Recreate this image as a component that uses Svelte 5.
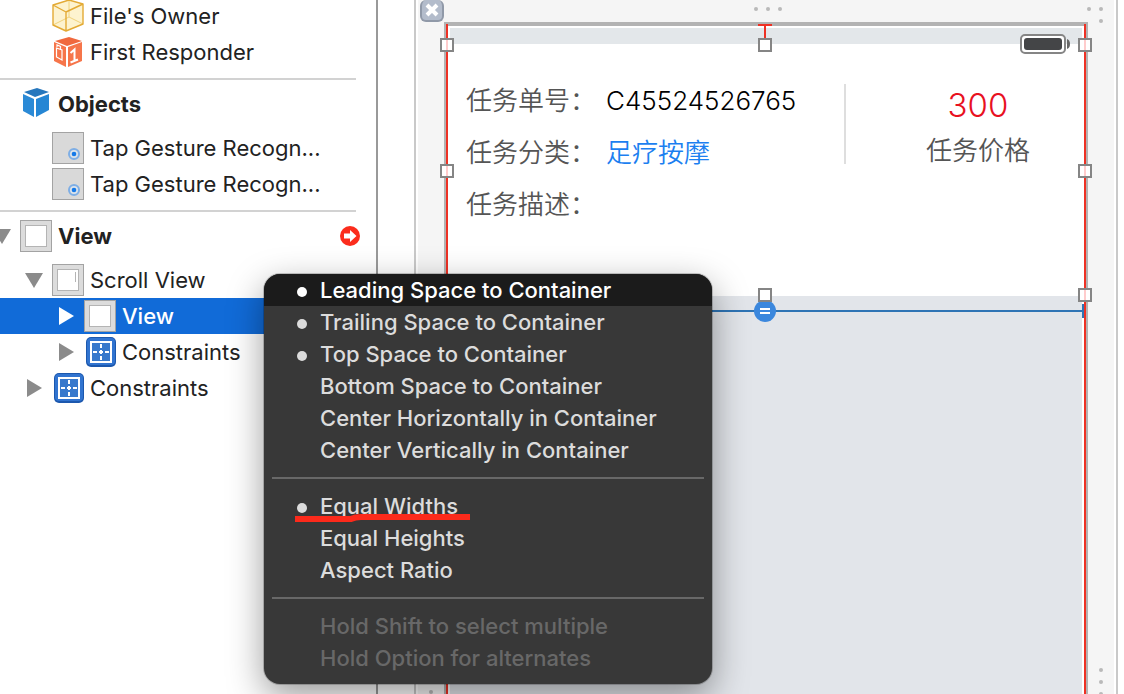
<script>
  const documentRows = [
    { label: "File's Owner", icon: 'owner', depth: 1 },
    { label: 'First Responder', icon: 'responder', depth: 1 }
  ];

  const objectRows = [
    { label: 'Tap Gesture Recogn...', icon: 'gesture', depth: 1 },
    { label: 'Tap Gesture Recogn...', icon: 'gesture', depth: 1 }
  ];

  const viewRows = [
    { label: 'Scroll View', icon: 'scroll', depth: 1, toggle: 'open' },
    { label: 'View', icon: 'view', depth: 2, toggle: 'closed', selected: true },
    { label: 'Constraints', icon: 'constraints', depth: 2, toggle: 'closed' },
    { label: 'Constraints', icon: 'constraints', depth: 1, toggle: 'closed' }
  ];

  const sections = [
    { rows: documentRows },
    { header: { label: 'Objects', icon: 'objects', depth: 0 }, rows: objectRows },
    { header: { label: 'View', icon: 'view', depth: 0, toggle: 'open', warning: true }, rows: viewRows }
  ];

  const menuGroups = [
    [
      { label: 'Leading Space to Container', on: true },
      { label: 'Trailing Space to Container', on: true },
      { label: 'Top Space to Container', on: true },
      { label: 'Bottom Space to Container' },
      { label: 'Center Horizontally in Container' },
      { label: 'Center Vertically in Container' }
    ],
    [
      { label: 'Equal Widths', on: true, marked: true },
      { label: 'Equal Heights' },
      { label: 'Aspect Ratio' }
    ],
    [
      { label: 'Hold Shift to select multiple', disabled: true },
      { label: 'Hold Option for alternates', disabled: true }
    ]
  ];

  const fields = [
    { label: '任务单号：', value: 'C45524526765' },
    { label: '任务分类：', value: '足疗按摩', link: true },
    { label: '任务描述：', value: '' }
  ];

  const handles = ['top left', 'top center', 'top right', 'middle left', 'middle right', 'bottom center', 'bottom right'];

  let highlighted = $state('Leading Space to Container');
</script>

{#snippet icon(name)}
  <svg class="icon" viewBox="0 0 32 32" aria-hidden="true">
    {#if name === 'owner'}
      <path d="M17 0 31 4 V24 L14 31 1 25 V5Z" fill="#fdf3cf" />
      <path d="M17 0 V17 L1 25 M17 17 31 24" fill="none" stroke="#f0d27c" stroke-width="1" />
      <path d="M1 5 17 0 31 4 V24 L14 31 1 25Z M1 5 14 12 31 4 M14 12 V31" fill="none" stroke="#e3aa35" stroke-width="1.4" stroke-linejoin="round" />
    {:else if name === 'responder'}
      <path d="M17 1 30 5 15 10 3 5Z" fill="#f0693e" />
      <path d="M2 6 14 11 V31 L2 25Z M16 11 30 6 V25 L16 31Z" fill="#f6754a" />
      <path d="M4.5 12 10 14 V24 L4.5 21Z M5 11 V9 L8.5 10.5 V13" fill="none" stroke="#fff" stroke-width="1.2" />
      <path d="M18.5 17 22.5 13.5 V25 M18.5 26.5 26 23.5" fill="none" stroke="#fff" stroke-width="2" />
    {:else if name === 'objects'}
      <path d="M17 0 29 4 15 9 4 4Z" fill="#2677bd" />
      <path d="M3 6 14 11 V29 L3 23Z" fill="#2b8ad6" />
      <path d="M16 11 29 6 V22 L16 29Z" fill="#2586d4" />
    {:else if name === 'gesture'}
      <rect x="0.5" y="0.5" width="31" height="31" fill="#d9d9d9" stroke="#a3a3a3" />
      <circle cx="22" cy="22" r="5" fill="#dce3ea" stroke="#7eaee5" stroke-width="2" />
      <circle cx="22" cy="22" r="2.3" fill="#1579e8" />
    {:else if name === 'view' || name === 'scroll'}
      <rect x="0.5" y="0.5" width="31" height="31" fill="#dcdcdc" stroke="#a3a3a3" />
      <rect x="5.5" y="5.5" width="21" height="21" fill="#fff" stroke="#b4b4b4" />
      {#if name === 'scroll'}
        <path d="M23.5 8 V18" stroke="#b4b4b4" />
      {/if}
    {:else if name === 'constraints'}
      <rect x="2" y="1" width="30" height="30" rx="5" fill="#1c58ae" />
      <rect x="3" y="2" width="28" height="27" rx="4" fill="#3174d0" />
      <rect x="7" y="6" width="20" height="20" fill="#3879cc" stroke="#fff" stroke-width="2" />
      <path d="M17 8 V12 M17 14 V18 M17 20 V24 M9 16 H13 M15 16 H19 M21 16 H25" stroke="#fff" stroke-width="2" />
    {/if}
  </svg>
{/snippet}

{#snippet row(item, header)}
  <div class="row" class:header class:selected={item.selected} style="--depth: {item.depth}">
    <span class="slot">
      {#if item.toggle}
        <button class="toggle" aria-label="Toggle {item.label}" aria-expanded={item.toggle === 'open'}>
          <svg viewBox="0 0 20 20" aria-hidden="true">
            {#if item.toggle === 'open'}
              <path d="M1 3 H19 L10 18Z" />
            {:else}
              <path d="M3 1 18 10 3 19Z" />
            {/if}
          </svg>
        </button>
      {/if}
    </span>
    {@render icon(item.icon)}
    <span class="label">{item.label}</span>
    {#if item.warning}
      <button class="warning" aria-label="Show layout issues">
        <svg viewBox="0 0 20 20" aria-hidden="true">
          <circle cx="10" cy="10" r="10" fill="#fb2c1c" />
          <path d="M4 7.5 H10 V4 L16.5 10 10 16 V12.5 H4Z" fill="#fff" />
        </svg>
      </button>
    {/if}
  </div>
{/snippet}

<div class="editor">
  <nav class="outline" aria-label="Document outline">
    {#each sections as section}
      <section>
        {#if section.header}
          {@render row(section.header, true)}
        {/if}
        {#each section.rows as item}
          {@render row(item, false)}
        {/each}
      </section>
    {/each}
  </nav>

  <main class="canvas">
    <button class="close" aria-label="Close">
      <svg viewBox="0 0 24 22" aria-hidden="true">
        <path d="M7 5 17 15 M17 5 7 15" stroke="#fff" stroke-width="4" />
      </svg>
    </button>
    <span class="grip grip-top"><i></i><i></i><i></i></span>
    <span class="grip grip-corner"><i></i><i></i><i></i></span>
    <span class="grip grip-side"><i></i><i></i><i></i></span>
    <span class="grip grip-left"><i></i></span>

    <div class="device">
      <div class="screen">
        <div class="status">
          <svg class="battery" viewBox="0 0 50 20" aria-hidden="true">
            <rect x="1" y="1" width="44" height="18" rx="4" fill="#fff" stroke="#858585" stroke-width="2" />
            <rect x="4" y="4" width="38" height="12" rx="3" fill="#444547" />
            <path d="M47 5 Q50 6 50 10 T47 15Z" fill="#666" />
          </svg>
        </div>
        <div class="card">
          <dl class="fields">
            {#each fields as field}
              <div class="field">
                <dt>{field.label}</dt>
                <dd>
                  {#if field.link}
                    <a href="#category">{field.value}</a>
                  {:else}
                    {field.value}
                  {/if}
                </dd>
              </div>
            {/each}
          </dl>
          <div class="price">
            <strong>300</strong>
            <span>任务价格</span>
          </div>
        </div>
      </div>

      <div class="selection">
        <svg class="pin" viewBox="0 0 14 16" aria-hidden="true">
          <path d="M0 1 H14 M7 1 V16" stroke="#ee3124" stroke-width="2" />
        </svg>
        <div class="equal">
          <svg viewBox="0 0 22 22" aria-hidden="true">
            <circle cx="11" cy="11" r="11" fill="#3b87dd" />
            <path d="M6 9 H16 M6 13 H16" stroke="#fff" stroke-width="2" />
          </svg>
        </div>
        {#each handles as place}
          <span class="handle {place}"></span>
        {/each}
      </div>
    </div>
  </main>

  <div class="menu" role="menu">
    {#each menuGroups as group}
      <div class="group" role="group">
        {#each group as item}
          <button
            role="menuitem"
            class:on={item.on}
            class:highlighted={highlighted === item.label}
            disabled={item.disabled}
            onmouseenter={() => (highlighted = item.label)}
          >
            {item.label}
            {#if item.marked}
              <svg class="mark" viewBox="0 0 176 10" aria-hidden="true">
                <path d="M0 6 H56 Q60 4 66 4 H175" fill="none" stroke="#fc2a1b" stroke-width="6" />
              </svg>
            {/if}
          </button>
        {/each}
      </div>
    {/each}
  </div>
</div>

<style>
  :global(body) {
    background: #fff;
    font-family: Inter, 'Noto Sans CJK SC', sans-serif;
  }

  button {
    padding: 0;
    border: 0;
    background: none;
    font: inherit;
  }

  svg {
    display: block;
  }

  .editor {
    position: relative;
    display: flex;
    height: 100vh;
    overflow: hidden;
  }

  /* outline */
  .outline {
    flex: 0 0 376px;
    border-right: 2px solid #999;
    color: #222;
    font-size: 22px;
  }

  section {
    padding-bottom: 8px;
  }

  section:first-child {
    margin-top: -2px;
  }

  section + section::before {
    content: '';
    display: block;
    height: 2px;
    margin-right: 20px;
    background: #d2d2d2;
  }

  .row {
    display: flex;
    align-items: center;
    height: 36px;
    padding-left: calc(var(--depth) * 32px);
    white-space: nowrap;
  }

  .row.header {
    height: 48px;
    padding-bottom: 2px;
    font-weight: 700;
  }

  .row.selected {
    background: #116bd8;
    color: #fff;
    font-weight: 500;
  }

  .slot {
    flex: none;
    width: 20px;
    height: 20px;
  }

  .toggle {
    display: block;
    width: 20px;
    height: 20px;
    margin-left: -8px;
    fill: #8b8b8b;
  }

  .selected .toggle {
    fill: #fff;
  }

  .icon {
    flex: none;
    width: 32px;
    height: 32px;
    margin-right: 6px;
  }

  .label {
    flex: 1;
  }

  .warning {
    width: 20px;
    height: 20px;
    margin-right: 16px;
  }

  /* canvas */
  .canvas {
    position: relative;
    display: flex;
    flex: 1;
    margin: 0 6px 0 36px;
    padding: 22px 28px 0;
    border: solid #c9c9c9;
    border-width: 0 2px;
    background: #f5f5f5;
    box-shadow: inset 2px 0 #fff, inset -2px 0 #fff;
  }

  .close {
    position: absolute;
    top: 0;
    left: 4px;
    width: 24px;
    height: 22px;
    border: 2px solid #9099a8;
    border-top: 0;
    border-radius: 6px;
    background: #b3bccb;
  }

  .close svg {
    width: 24px;
    height: 22px;
    margin-left: -2px;
  }

  .grip {
    position: absolute;
    display: grid;
    gap: 8px;
  }

  .grip i {
    width: 4px;
    height: 4px;
    border-radius: 2px;
    background: #b9b9b9;
  }

  .grip-top {
    top: 7px;
    left: 50%;
    grid-auto-flow: column;
    margin-left: -12px;
  }

  .grip-corner {
    top: 7px;
    right: 13px;
    grid-template-columns: 4px 4px;
  }

  .grip-corner i:last-child {
    grid-column: 2;
  }

  .grip-side {
    right: 13px;
    bottom: -2px;
  }

  .grip-left {
    bottom: 0;
    left: 13px;
  }

  .device {
    position: relative;
    display: flex;
    flex: 1;
    border: solid #b3b3b3;
    border-width: 4px 2px 0;
  }

  .screen {
    flex: 1;
    margin: 0 2px;
    border: 2px solid #fff;
    border-bottom: 0;
    background: #e2e5ea;
  }

  .status {
    display: flex;
    justify-content: flex-end;
    height: 16px;
    padding-right: 12px;
    background: #e3e7ea;
  }

  .battery {
    position: relative;
    flex: none;
    width: 50px;
    height: 20px;
    margin-top: 6px;
  }

  .card {
    display: flex;
    height: 252px;
    background: #fff;
    color: #555;
    font-size: 26px;
    font-weight: 350;
    line-height: 52px;
  }

  .fields {
    flex: 1;
    margin: 31px 0 0 16px;
  }

  .field {
    display: flex;
    gap: 10px;
  }

  dt {
    width: 130px;
    white-space: nowrap;
  }

  dd {
    margin: 0;
    color: #000;
  }

  dd a {
    color: #1c7ff0;
    text-decoration: none;
  }

  .price {
    display: flex;
    flex: 0 0 238px;
    flex-direction: column;
    align-items: center;
    box-sizing: border-box;
    height: 80px;
    margin-top: 40px;
    padding: 1px 24px 0 54px;
    background: linear-gradient(#dedede, #dedede) no-repeat 0 0 / 2px 100%;
  }

  .price strong {
    color: #e8111f;
    font-size: 33px;
    font-weight: 350;
    line-height: 40px;
  }

  /* selection overlay, anchored to the frame of the selected view */
  .selection {
    position: absolute;
    top: -2px;
    right: 0;
    bottom: 0;
    left: 0;
    border: solid #ee3124;
    border-width: 0 2px;
  }

  .pin {
    position: absolute;
    top: 0;
    left: 50%;
    width: 14px;
    height: 16px;
    margin-left: -8px;
  }

  .equal {
    position: absolute;
    top: 280px;
    right: 0;
    left: 0;
    height: 14px;
    border-right: 2px solid #2e74b5;
    background: linear-gradient(#2e74b5, #2e74b5) no-repeat 0 6px / 100% 2px;
  }

  .equal svg {
    position: absolute;
    top: -4px;
    left: 50%;
    width: 22px;
    height: 22px;
    margin-left: -11px;
  }

  .handle {
    position: absolute;
    box-sizing: border-box;
    width: 14px;
    height: 14px;
    border: 2px solid #858585;
    background: linear-gradient(#fcc, #fcc) no-repeat center / 2px 100% #fff;
  }

  .handle.top {
    top: 14px;
  }

  .handle.middle {
    top: 140px;
  }

  .handle.bottom {
    top: 264px;
  }

  .handle.left {
    left: -8px;
  }

  .handle.center {
    left: 50%;
    margin-left: -8px;
    background: #fff;
  }

  .handle.right {
    right: -8px;
  }

  /* constraint menu */
  .menu {
    position: absolute;
    top: 274px;
    left: 264px;
    width: 448px;
    padding-bottom: 10px;
    overflow: hidden;
    border-radius: 16px;
    background: #383838;
    font-size: 22px;
    font-weight: 500;
    box-shadow: 0 0 0 1px #0003, 0 12px 36px #0006;
  }

  .group + .group::before {
    content: '';
    display: block;
    height: 2px;
    margin: 11px 8px;
    background: #686868;
  }

  .menu button {
    position: relative;
    display: block;
    width: 100%;
    height: 32px;
    padding-left: 56px;
    color: #dcdcdc;
    text-align: left;
    white-space: nowrap;
  }

  .menu button.on::before {
    content: '';
    position: absolute;
    top: 13px;
    left: 33px;
    width: 10px;
    height: 10px;
    border-radius: 50%;
    background: currentColor;
  }

  .menu button.highlighted {
    background: #1b1b1b;
    color: #fff;
  }

  .menu button:disabled {
    color: #686868;
  }

  .mark {
    position: absolute;
    top: 23px;
    left: 31px;
    width: 176px;
    height: 10px;
  }
</style>
